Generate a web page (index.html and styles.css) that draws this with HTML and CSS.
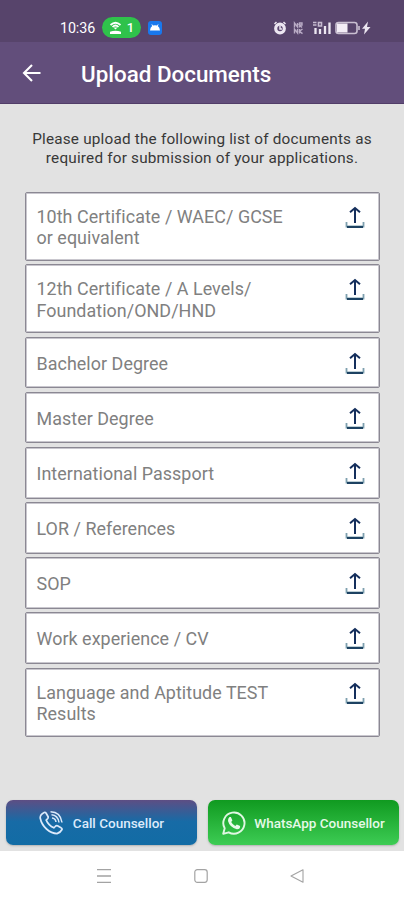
FILE: index.html
```html
<!DOCTYPE html>
<html lang="en">
<head>
<meta charset="utf-8">
<title>Upload Documents</title>
<link rel="stylesheet" href="styles.css">
</head>
<body>
<svg class="defs" aria-hidden="true">
  <symbol id="upload" viewBox="0 0 20 24">
    <path d="M1.500 16V20.500H18.500V16" fill="none" stroke="#7d9fae" stroke-width="1.800"/>
    <path d="M2 21H18" stroke="#1d4262" stroke-width="2"/>
    <path d="M10 17V2M5 6.300L10 2L15 6.300" fill="none" stroke="#152f5c" stroke-width="2"/>
  </symbol>
</svg>
<div class="screen">
  <div class="status">
    <span class="clock">10:36</span>
    <span class="hotspot">
      <svg width="13" height="14" viewBox="0 0 13 14" fill="none" stroke="#fff"><path d="M1.500 4Q6.500-.5 11.500 4M3.500 6Q6.500 3 9.500 6" stroke-width="1.700"/><path d="M6.500 8.500L4.500 6.500h4zM1 13V10.800Q6.500 8.800 12 10.800V13z" fill="#fff" stroke="none"/></svg>
      <span>1</span>
    </span>
    <span class="robot"><svg width="10" height="7" viewBox="0 0 10 7"><path d="M0 6.500Q.3 3.200 2.200 2L1.400.5 2 .2 3 1.600Q5 1 7 1.600L8 .2l.6.3L7.800 2Q9.700 3.200 10 6.500z" fill="#fff"/></svg></span>
    <svg class="signals" width="100" height="16" viewBox="0 0 100 16" fill="none" stroke="#ece6f1">
      <circle cx="7" cy="8.500" r="4.300" fill="#5b466f" stroke-width="3.200"/><path d="M7 6v3h2M1.500 4l2-2M12.500 4l-2-2" stroke-width="1.500"/>
      <g stroke="#b9abc5"><path d="M21.500 7.500V3l3 4V3M26.500 7.500V3h2.500v2h-2.500l2.500 2.500M21.500 13.500V9l3 4V9M26.500 9v4.500M29.500 9l-3 2.300 3 2.300" stroke-width="1.400"/></g>
      <path d="M42.500 14V8M47 14V9M52 14V6M56.500 14V2.500" stroke-width="2.300"/><path d="M40 2.500h3.500M40 5h3.500M45.500 2.500h3v3.500h-3z" stroke="#c6bad0" stroke-width="1.600"/>
      <rect x="63" y="2.500" width="21" height="11" rx="2.500" stroke="#c9bfd1" stroke-width="1.600"/><rect x="64" y="3.500" width="10.500" height="9" fill="#f3edf6" stroke="none"/><path d="M86 6v4" stroke="#c9bfd1" stroke-width="1.600"/>
      <path d="M95 1.500l-6 7.200h3L91 14.500l6.500-7.500h-3.500z" fill="#ece6f1" stroke="none"/>
    </svg>
  </div>
  <header class="bar">
    <svg class="back" width="20" height="20" viewBox="0 0 20 20" fill="none" stroke="#fff" stroke-width="2.100"><path d="M18.500 10H2.500M10 2L2 10l8 8"/></svg>
    <h1>Upload Documents</h1>
  </header>
  <main>
    <p class="intro">Please upload the following list of documents as<br>required for submission of your applications.</p>
    <ul class="docs">
      <li class="tall"><span>10th Certificate / WAEC/ GCSE<br>or equivalent</span><svg><use href="#upload"/></svg></li>
      <li class="tall"><span>12th Certificate / A Levels/<br>Foundation/OND/HND</span><svg><use href="#upload"/></svg></li>
      <li><span>Bachelor Degree</span><svg><use href="#upload"/></svg></li>
      <li><span>Master Degree</span><svg><use href="#upload"/></svg></li>
      <li><span>International Passport</span><svg><use href="#upload"/></svg></li>
      <li><span>LOR / References</span><svg><use href="#upload"/></svg></li>
      <li><span>SOP</span><svg><use href="#upload"/></svg></li>
      <li><span>Work experience / CV</span><svg><use href="#upload"/></svg></li>
      <li class="tall"><span>Language and Aptitude TEST<br>Results</span><svg><use href="#upload"/></svg></li>
    </ul>
  </main>
  <div class="actions">
    <button class="call">
      <svg width="24" height="25" viewBox="0 0 24 25" fill="none" stroke="#dceafb" stroke-width="1.700" stroke-linejoin="round"><path d="M5.200 2.500Q1 4.500 1.200 8Q2.500 14.500 7.500 19Q12.500 23.500 18 23.600Q21.500 22.500 23 19.500Q23.300 18.500 22 17.800L18.500 15.800Q17.200 15.400 16.200 16.500L14.800 17.800Q9.500 15.500 7.200 10.200L8.800 8.500Q9.500 7.500 9 6.500L7 3Q6.200 2 5.200 2.500z"/><path d="M11.500 1.800Q21.500 2 23 12.500M12.500 4.800Q18.800 5.200 20 12.500M13 8Q16.500 8.500 17 12" stroke-width="1.500"/></svg>
      <span>Call Counsellor</span>
    </button>
    <button class="whatsapp">
      <svg width="24" height="24" viewBox="0 0 24 24"><path d="M1.200 22.800L2.700 17.300A10.600 10.600 0 1 1 6.700 21.300z" fill="none" stroke="#e0f7e3" stroke-width="1.900" stroke-linejoin="round"/><path d="M7.500 6h1.400l1.500 3.400-1.200 1.700Q10.700 14 13.300 15l1.500-1.600 3.300 1.600Q18.200 18.500 14.800 18.200Q7.800 16.500 6 10Q5.800 7.300 7.500 6z" fill="#e8faea"/></svg>
      <span>WhatsApp Counsellor</span>
    </button>
  </div>
  <nav class="nav">
    <svg width="14" height="16" viewBox="0 0 14 16" stroke="#a3a3a3" stroke-width="1.300"><path d="M0 1.700h14M0 8h14M0 14.300h14"/></svg>
    <svg width="14" height="16" viewBox="0 0 14 16" fill="none" stroke="#a3a3a3" stroke-width="1.200"><rect x=".8" y="1.700" width="12.400" height="12.600" rx="2.500"/></svg>
    <svg width="14" height="16" viewBox="0 0 14 16" fill="none" stroke="#a3a3a3" stroke-width="1.100" stroke-linejoin="round"><path d="M13 1.700V14.300L1 8z"/></svg>
  </nav>
</div>
</body>
</html>
```
FILE: styles.css
```css
* { box-sizing: border-box; }
body { margin: 0; font-family: Roboto, "Liberation Sans", sans-serif; }
.defs { display: none; }
.screen { width: 404px; height: 900px; display: flex; flex-direction: column; background: #e2e2e2; overflow: hidden; }
.status { height: 42px; background: #57446b; display: flex; align-items: center; padding: 13px 31px 0 60px; color: #fff; }
.clock { width: 42px; font-size: 14.3px; font-weight: 400; letter-spacing: -.1px; white-space: nowrap; }
.hotspot { width: 39px; height: 21px; border-radius: 11px; background: #2fc24b; display: flex; align-items: center; justify-content: center; gap: 5px; font-size: 13px; font-weight: 500; }
.robot { width: 14px; height: 14px; margin-left: 7px; border-radius: 3px; background: #1978ed; display: flex; align-items: center; justify-content: center; }
.signals { margin-left: auto; }
.bar { height: 62px; background: #624e7b; border-bottom: 1px solid #513d68; display: flex; align-items: center; padding-left: 22px; }
.back { margin-right: 39px; }
h1 { margin: 2px 0 0; color: #fff; font-size: 22.400px; line-height: 28px; font-weight: 500; white-space: nowrap; }
main { flex: 1; padding: 26px 24.500px 0; }
.intro { margin: 0; text-align: center; font-size: 15.300px; letter-spacing: .2px; line-height: 18.500px; color: #383838; white-space: nowrap; }
.docs { list-style: none; margin: 24.500px 0 0; padding: 0; display: grid; gap: 3.600px; }
.docs li { height: 51.550px; border: 1px solid #8b8893; box-shadow: inset 0 0 0 1px #c9c7ce; border-radius: 2px; background: #fff; display: flex; justify-content: space-between; align-items: flex-start; padding: 15px 14px 0 11px; font-size: 17.900px; line-height: 21.600px; letter-spacing: .05px; color: #808080; white-space: nowrap; }
.docs .tall { height: 69px; padding-top: 13px; }
.docs svg { width: 20px; height: 24px; margin-top: -1px; }
.docs .tall svg { margin-top: 0; }
.actions { height: 52px; display: flex; gap: 11px; padding: 1px 5px 6px 6px; }
button { flex: 1; border: 0; border-radius: 7px; padding: 0; display: flex; align-items: center; justify-content: center; font: 500 13.500px Roboto, "Liberation Sans", sans-serif; white-space: nowrap; box-shadow: 0 1px 2px #8888; }
.call { gap: 10px; color: #dceafb; background: linear-gradient(#5d4e84, #176ba6 48%, #126ca5); }
.whatsapp { gap: 8px; color: #e5f9e7; background: linear-gradient(#109a20, #3dcc54); }
.nav { height: 49px; background: #fff; display: flex; justify-content: center; gap: 82.500px; padding: 17px 3px 0 0; }
```
